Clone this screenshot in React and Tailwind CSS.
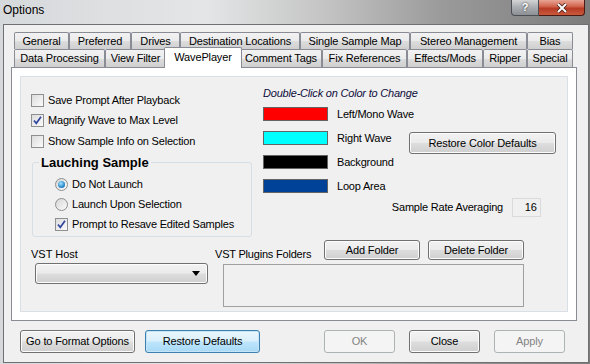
import React from 'react';

const btnBase = 'flex items-center justify-center rounded-[3px] border border-[#707070] bg-[linear-gradient(to_bottom,#f2f2f2_0%,#ebebeb_48%,#dddddd_52%,#cfcfcf_100%)] shadow-[inset_0_0_0_1px_#fcfcfc] tracking-[-0.15px]';
const btnFocus = 'flex items-center justify-center rounded-[3px] border border-[#3c7fb1] bg-[linear-gradient(to_bottom,#eaf6fd_0%,#d9f0fc_48%,#bee6fd_52%,#a7d9f5_100%)] shadow-[inset_0_0_0_1px_#c5e4f6] tracking-[-0.15px]';
const btnOff = 'flex items-center justify-center rounded-[3px] border border-[#adb2b5] bg-[#f4f4f4] text-[#838383] tracking-[-0.15px]';

const tabBase = 'h-full flex items-center justify-center border border-b-0 border-[#898c95] rounded-t-[2px] bg-[linear-gradient(to_bottom,#f2f2f2_0%,#ebebeb_50%,#dddddd_51%,#cfcfcf_100%)] tracking-[-0.15px] leading-none';

const Check = ({ checked }) => (
    <span className="w-[13px] h-[13px] shrink-0 border border-[#8e8f8f] bg-[linear-gradient(135deg,#dcdcdc,#fbfbfb)] flex items-center justify-center">
        {checked && (
            <svg width="11" height="11" viewBox="0 0 11 11">
                <path d="M2 5.5 L4.3 8.3 L9 1.8" fill="none" stroke="#30469e" strokeWidth="1.7" />
            </svg>
        )}
    </span>
);

const Radio = ({ checked }) => (
    <span className="w-[13px] h-[13px] shrink-0 rounded-full border border-[#8e8f8f] bg-[linear-gradient(135deg,#d6d6d6,#fbfbfb)] flex items-center justify-center">
        {checked && <span className="w-[7px] h-[7px] rounded-full bg-[radial-gradient(circle_at_40%_35%,#a6e3fb,#2b8bd0_60%,#14578f)]" />}
    </span>
);

const Row = ({ h, children }) => <div className={`flex items-center gap-[4px] tracking-[-0.2px] ${h}`}>{children}</div>;

const topTabs = [
    ['General', 'w-[55px]'],
    ['Preferred', 'w-[62px]'],
    ['Drives', 'w-[49px]'],
    ['Destination Locations', 'w-[120px]'],
    ['Single Sample Map', 'w-[110px]'],
    ['Stereo Management', 'w-[117px]'],
    ['Bias', 'w-[46px]'],
];

const swatches = [
    ['bg-[#ff0000]', 'Left/Mono Wave'],
    ['bg-[#00ffff]', 'Right Wave'],
    ['bg-[#000000]', 'Background'],
    ['bg-[#004297]', 'Loop Area'],
];

export default function App() {
    return (
        <div className="w-[590px] h-[364px] overflow-hidden bg-[linear-gradient(90deg,#d6d9dc_0%,#e4e5e6_35%,#c4c4c4_55%,#9a9a9a_75%,#7c7c7c_100%)] font-['Liberation_Sans',Arial,sans-serif] text-[11px] text-black">
            {/* title bar */}
            <div className="h-[24px] flex items-start">
                <div className="pl-[3px] pt-[3px] text-[12px] leading-[14px]">Options</div>
                <div className="ml-auto mr-[5px] flex">
                    <div className="w-[28px] h-[16px] rounded-bl-[4px] border border-t-0 border-[#4b4f55] bg-[linear-gradient(to_bottom,#d2d4d6,#a9acb0_50%,#8c9095)] flex items-center justify-center text-white font-bold text-[11px] leading-none [text-shadow:0_0_2px_#222]">?</div>
                    <div className="w-[46px] h-[16px] rounded-br-[4px] border border-t-0 border-l-0 border-[#4a1a12] bg-[linear-gradient(to_bottom,#e8a594,#d0604a_45%,#b83a24_55%,#c95a3e)] flex items-center justify-center">
                        <svg width="12" height="10" viewBox="0 0 12 10">
                            <path d="M2 1 L10 9 M10 1 L2 9" stroke="#3a1610" strokeWidth="3.4" />
                            <path d="M2 1 L10 9 M10 1 L2 9" stroke="#fff" strokeWidth="2" />
                        </svg>
                    </div>
                </div>
            </div>

            {/* client area */}
            <div className="ml-[3px] w-[586px] h-[339px] border border-[#6f7074] bg-[#f0f0f0] flex flex-col">
                <div className="ml-[7px] mt-[7px] w-[566px]">
                    <div className="flex pl-[3px] h-[17px]">
                        {topTabs.map(([label, w]) => (
                            <div key={label} className={`${tabBase} ${w}`}>{label}</div>
                        ))}
                    </div>
                    <div className="flex items-end pl-[3px] h-[18px]">
                        <div className={`${tabBase} w-[91px]`}>Data Processing</div>
                        <div className={`${tabBase} w-[61px]`}>View Filter</div>
                        <div className="relative z-10 -mx-[2px] -mb-[1px] w-[78px] h-[21px] flex items-center justify-center border border-b-0 border-[#898c95] rounded-t-[2px] bg-white tracking-[-0.15px] leading-none pb-[2px]">WavePlayer</div>
                        <div className={`${tabBase} w-[82px]`}>Comment Tags</div>
                        <div className={`${tabBase} w-[85px]`}>Fix References</div>
                        <div className={`${tabBase} w-[76px]`}>Effects/Mods</div>
                        <div className={`${tabBase} w-[44px]`}>Ripper</div>
                        <div className={`${tabBase} w-[46px]`}>Special</div>
                    </div>

                    {/* tab page */}
                    <div className="h-[254px] border border-[#898c95] bg-white p-[8px]">
                        <div className="w-[548px] h-[236px] border border-[#d9dfe4] bg-[#f0f0f0] flex flex-col">
                            <div className="flex items-start">
                                {/* left column */}
                                <div className="ml-[10px] pt-[13px] w-[221px]">
                                    <Row h="h-[20px]"><Check /><span>Save Prompt After Playback</span></Row>
                                    <Row h="h-[21px]"><Check checked /><span>Magnify Wave to Max Level</span></Row>
                                    <Row h="h-[21px]"><Check /><span>Show Sample Info on Selection</span></Row>
                                    <fieldset className="ml-[1px] mt-[4px] w-[220px] border border-[#d5dfe5] rounded-[3px] pb-[1px]">
                                        <legend className="ml-[6px] px-[2px] text-[13px] leading-[13px] font-bold">Lauching Sample</legend>
                                        <div className="pt-[5px] pl-[22px]">
                                            <Row h="h-[20px]"><Radio checked /><span>Do Not Launch</span></Row>
                                            <Row h="h-[20px]"><Radio /><span>Launch Upon Selection</span></Row>
                                            <Row h="h-[21px]"><Check checked /><span>Prompt to Resave Edited Samples</span></Row>
                                        </div>
                                    </fieldset>
                                </div>

                                {/* right column */}
                                <div className="ml-[11px] pt-[10px]">
                                    <div className="leading-[12px] italic text-[#0c0c3c] tracking-[-0.2px]">Double-Click on Color to Change</div>
                                    <div className="flex mt-[8px]">
                                        <div className="w-[146px] flex flex-col gap-[10px]">
                                            {swatches.map(([bg, label]) => (
                                                <div key={label} className="flex items-center h-[14px] gap-[9px] tracking-[-0.2px]">
                                                    <span className={`w-[65px] h-[14px] shrink-0 border border-[#646464] ${bg}`} />
                                                    <span className="whitespace-nowrap">{label}</span>
                                                </div>
                                            ))}
                                        </div>
                                        <div className={`${btnBase} mt-[25px] w-[147px] h-[22px]`}>Restore Color Defaults</div>
                                    </div>
                                    <div className="mt-[5px] w-[278px] flex items-center justify-end gap-[9px]">
                                        <span className="tracking-[-0.2px]">Sample Rate Averaging</span>
                                        <span className="w-[29px] h-[19px] border border-[#dadada] flex items-center justify-end pr-[3px]">16</span>
                                    </div>
                                </div>
                            </div>

                            {/* VST section */}
                            <div className="flex items-start mt-[3px]">
                                <div className="ml-[10px] w-[184px]">
                                    <div className="pt-[8px] leading-[12px]">VST Host</div>
                                    <div className={`${btnBase} ml-[4px] mt-[3px] w-[173px] h-[21px] !justify-end pr-[7px]`}>
                                        <svg width="8" height="5" viewBox="0 0 8 5">
                                            <path d="M0 0 H8 L4 5 Z" fill="#000" />
                                        </svg>
                                    </div>
                                </div>
                                <div className="flex flex-col">
                                    <div className="flex items-start">
                                        <div className="w-[109px] pt-[8px] leading-[12px] tracking-[-0.2px]">VST Plugins Folders</div>
                                        <div className={`${btnBase} w-[96px] h-[20px]`}>Add Folder</div>
                                        <div className={`${btnBase} ml-[8px] w-[96px] h-[20px]`}>Delete Folder</div>
                                    </div>
                                    <div className="ml-[8px] mt-[4px] w-[301px] h-[43px] border border-[#a0a0a0] bg-[#f0f0f0]" />
                                </div>
                            </div>
                        </div>
                    </div>
                </div>

                {/* dialog buttons */}
                <div className="flex pl-[16px] mt-[9px]">
                    <div className={`${btnBase} w-[115px] h-[23px]`}>Go to Format Options</div>
                    <div className={`${btnFocus} ml-[10px] w-[115px] h-[23px]`}>Restore Defaults</div>
                    <div className={`${btnOff} ml-auto w-[71px] h-[23px]`}>OK</div>
                    <div className={`${btnBase} ml-[14px] w-[71px] h-[23px]`}>Close</div>
                    <div className={`${btnOff} ml-[14px] mr-[23px] w-[71px] h-[23px]`}>Apply</div>
                </div>
            </div>
        </div>
    );
}
